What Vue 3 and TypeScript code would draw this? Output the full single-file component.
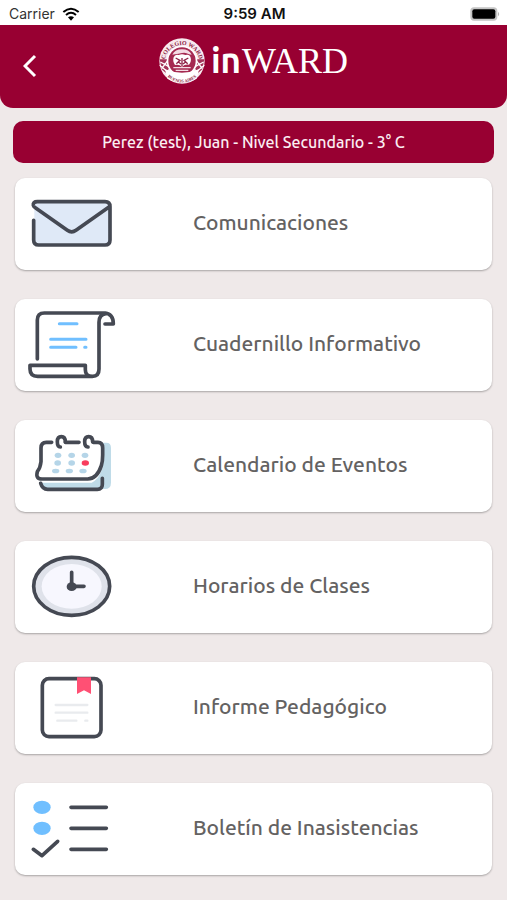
<script setup lang="ts">
type IconName = 'mail' | 'scroll' | 'calendar' | 'clock' | 'report' | 'checklist'

interface MenuItem {
  icon: IconName
  label: string
  viewBox: string
}

const student = 'Perez (test), Juan - Nivel Secundario - 3° C'

const items: MenuItem[] = [
  { icon: 'mail', label: 'Comunicaciones', viewBox: '45 204 360 276' },
  { icon: 'scroll', label: 'Cuadernillo Informativo', viewBox: '0 12 360 276' },
  { icon: 'calendar', label: 'Calendario de Eventos', viewBox: '0 0 360 276' },
  { icon: 'clock', label: 'Horarios de Clases', viewBox: '0 3 360 276' },
  { icon: 'report', label: 'Informe Pedagógico', viewBox: '0 6 360 276' },
  { icon: 'checklist', label: 'Boletín de Inasistencias', viewBox: '0 9 360 276' },
]
</script>

<template>
  <div class="screen">
    <div class="status">
      <span class="carrier">
        Carrier
        <svg class="wifi" viewBox="0 0 54 42" aria-hidden="true">
          <path d="M4 15Q27-5 50 15" />
          <path d="M12 24Q27 11 42 24" />
          <path class="wifi-dot" d="M18 31Q27 24 36 31L27 41Z" />
        </svg>
      </span>
      <span class="time">9:59 AM</span>
      <svg class="battery" viewBox="0 0 90 42" aria-hidden="true">
        <rect x="1" y="1" width="81" height="40" rx="11" fill="#c4c4c4" />
        <path d="M84 14Q91 21 84 28Z" fill="#b4b4b4" />
        <rect x="7" y="7" width="69" height="28" rx="6" fill="#000" />
      </svg>
    </div>

    <header class="header">
      <button class="back" type="button" aria-label="Volver">
        <svg viewBox="0 0 14 24" aria-hidden="true"><path d="M12 2L2 12L12 22" /></svg>
      </button>
      <div class="brand">
        <svg class="seal" viewBox="0 0 138 138" aria-hidden="true">
          <defs>
            <path id="seal-top" d="M17 73A52 52 0 0 1 121 73" />
            <path id="seal-bottom" d="M24 115A64 64 0 0 0 114 115" />
          </defs>
          <circle cx="69" cy="69" r="68" fill="#f8e9ee" />
          <path d="M2 64H30L38 82L20 104L8 94ZM136 64H108L100 82L118 104L130 94Z" fill="#a33458" />
          <path d="M4 72L30 86M8 92L26 68M134 72L108 86M130 92L112 68M2 82L22 98M136 82L116 98" stroke="#fff" stroke-width="4" />
          <circle cx="69" cy="69" r="46" fill="#fff" />
          <circle cx="69" cy="69" r="41" fill="#a52a51" />
          <path d="M40 50Q48 34 69 34T98 50L90 49Q80 42 69 45T48 49Z" fill="#f4dce4" />
          <path d="M44 58Q48 47 59 51Q69 46 79 51Q92 47 95 59Q98 70 90 80Q78 78 69 86Q60 78 48 81Q40 70 44 58Z" fill="#fff" />
          <path d="M69 60V84M50 60L63 67L52 77M88 60L75 67L86 77M58 72L66 78M80 72L72 78" stroke="#8f2348" stroke-width="4" fill="none" />
          <path d="M43 89H95M50 97H88" stroke="#f4dce4" stroke-width="4" />
          <path d="M18 94Q69 114 120 94L113 122Q69 146 25 122Z" fill="#fff" />
          <text class="seal-text"><textPath href="#seal-top" startOffset="50%">COLEGIO WARD</textPath></text>
          <text class="seal-small"><textPath href="#seal-bottom" startOffset="50%">BUENOS AIRES</textPath></text>
        </svg>
        <h1 class="name"><span class="in">in</span><span class="ward">WARD</span></h1>
      </div>
    </header>

    <main class="content">
      <p class="student">{{ student }}</p>
      <nav class="menu">
        <a v-for="item in items" :key="item.icon" class="card" href="#">
          <svg class="icon" :viewBox="item.viewBox" aria-hidden="true">
            <g v-if="item.icon === 'mail'" class="line">
              <rect x="103" y="276" width="226" height="129" rx="14" fill="#dfe9f7" stroke="none" />
              <path d="M107 294L112 275H315L328 288L228 361Q215 370 202 361Z" fill="#dfe9f7" stroke="none" />
              <path d="M101 331V390Q101 405 116 405H315Q330 405 330 390V290Q330 275 315 275H112Q98 275 100 286Q101 290 107 294L202 361Q215 370 228 361L328 290" />
            </g>
            <g v-else-if="item.icon === 'scroll'" class="line">
              <path d="M67 192V75Q67 54 88 54H268Q295 55 295 87H270" />
              <path d="M272 56Q252 59 252 82V222Q252 244 232 244Q211 244 211 224V211H45V222Q45 244 68 244H232" />
              <path class="blue" d="M133 86H186M107 133H213M107 157H183M209 157H213" />
            </g>
            <g v-else-if="item.icon === 'calendar'" class="line">
              <path d="M254 68H274Q288 68 288 84V188Q288 207 269 207H100Q82 207 78 188H230Q250 180 262 145Z" fill="#bfdbe8" stroke="none" />
              <path d="M110 67H94Q78 67 78 84V125Q76 144 67 155Q61 177 81 177H218Q246 177 259 137Q263 125 263 105V84Q263 67 249 67H235M151 67H192" fill="#fff" />
              <path d="M77 190Q82 208 98 208H247Q262 208 262 193V175" />
              <path d="M136 81Q127 80 127 65Q127 50 139 50Q151 50 151 66M219 81Q209 80 209 65Q209 50 221 50Q233 50 233 66" />
              <g fill="#b5d5e8" stroke="none">
                <ellipse cx="129" cy="106" rx="10" ry="8" /><ellipse cx="170" cy="106" rx="10" ry="8" /><ellipse cx="210" cy="106" rx="10" ry="8" />
                <ellipse cx="128" cy="129" rx="10" ry="8" /><ellipse cx="170" cy="129" rx="10" ry="8" />
                <ellipse cx="122" cy="153" rx="11" ry="7" /><ellipse cx="163" cy="153" rx="11" ry="7" /><ellipse cx="204" cy="153" rx="11" ry="7" />
                <ellipse cx="211" cy="129" rx="11" ry="8" fill="#f83d5d" />
              </g>
            </g>
            <g v-else-if="item.icon === 'clock'" class="line">
              <ellipse cx="170" cy="139" rx="114" ry="87" fill="#dfe2ea" />
              <ellipse cx="170" cy="139" rx="90" ry="67" fill="#f7f7fe" stroke="none" />
              <path class="hand" d="M170 97V139H207" />
              <ellipse cx="170" cy="140" rx="15" ry="13" fill="#454953" stroke="none" />
            </g>
            <g v-else-if="item.icon === 'report'" class="line">
              <rect x="82" y="56" width="176" height="174" rx="20" />
              <path d="M186 52H228V102L207 91L186 102Z" fill="#ff5074" stroke="none" />
              <path class="pale" d="M122 135H217M122 158H217M127 182H184M211 182H217" />
            </g>
            <g v-else class="line">
              <ellipse cx="81" cy="82" rx="26" ry="20" fill="#70bfff" stroke="none" />
              <ellipse cx="81" cy="145" rx="26" ry="20" fill="#70bfff" stroke="none" />
              <path d="M168 82H274M168 145H274M168 208H274M55 208L81 227L128 184" />
            </g>
          </svg>
          <span class="label">{{ item.label }}</span>
        </a>
      </nav>
    </main>
  </div>
</template>

<style>
body {
  margin: 0;
  background: #efe9e9;
}
</style>

<style scoped>
.screen {
  min-height: 100vh;
  background: #efe9e9;
  font-family: Ubuntu, "Noto Sans", sans-serif;
}

.status {
  display: grid;
  grid-template-columns: 1fr auto 1fr;
  align-items: center;
  height: 25px;
  padding: 2px 7px 0 9px;
  box-sizing: border-box;
  background: #fff;
  color: #111;
  font-family: Inter, sans-serif;
  font-size: 14px;
}

.carrier {
  display: flex;
  align-items: center;
  gap: 7px;
  color: #333;
}

.wifi {
  width: 18px;
  height: 14px;
  fill: none;
  stroke: #000;
  stroke-width: 6;
}

.wifi-dot {
  fill: #000;
  stroke: none;
}

.time {
  font-size: 15px;
  font-weight: 600;
}

.battery {
  justify-self: end;
  width: 30px;
  height: 14px;
}

.header {
  display: grid;
  grid-template-columns: 60px 1fr 60px;
  align-items: center;
  height: 83px;
  padding-bottom: 12px;
  box-sizing: border-box;
  border-radius: 0 0 13px 13px;
  background: #980032;
}

.back {
  display: flex;
  align-items: center;
  height: 44px;
  margin-top: 10px;
  padding: 0 0 0 23px;
  border: 0;
  background: none;
}

.back svg {
  width: 14px;
  height: 24px;
  fill: none;
  stroke: #fff;
  stroke-width: 3;
}

.brand {
  display: flex;
  align-items: center;
  justify-content: center;
  gap: 6px;
}

.seal {
  width: 46px;
  height: 46px;
}

.seal-text,
.seal-small {
  fill: #8a1a40;
  font-family: "Liberation Serif", serif;
  font-weight: 700;
  text-anchor: middle;
}

.seal-text {
  font-size: 18px;
}

.seal-small {
  font-size: 13px;
}

.name {
  display: flex;
  align-items: baseline;
  gap: 1px;
  margin: 0;
  color: #fff;
  line-height: 44px;
}

.in {
  font-size: 35px;
  font-weight: 700;
}

.ward {
  font-family: "Liberation Serif", serif;
  font-size: 36px;
  font-weight: 400;
}

.content {
  padding: 13px 13px 25px;
}

.student {
  margin: 0 0 15px;
  padding: 10px;
  border-radius: 10px;
  background: #980032;
  color: #fbeef2;
  font-size: 16px;
  font-weight: 500;
  line-height: 22px;
  text-align: center;
}

.menu {
  display: grid;
  gap: 29px;
  padding: 0 2px;
}

.card {
  display: flex;
  align-items: center;
  gap: 58px;
  border-radius: 10px;
  background: #fff;
  box-shadow: 0 1px 2px rgba(0, 0, 0, 0.3);
  color: #646262;
  text-decoration: none;
}

.icon {
  flex: none;
  width: 120px;
  height: 92px;
}

.line {
  fill: none;
  stroke: #454953;
  stroke-width: 11;
  stroke-linecap: round;
  stroke-linejoin: round;
}

.blue {
  stroke: #70bfff;
  stroke-width: 9;
}

.hand {
  stroke-width: 11;
}

.pale {
  stroke: #e9ebee;
  stroke-width: 7;
}

.label {
  padding-bottom: 4px;
  font-size: 21px;
  font-weight: 500;
  line-height: 28px;
}
</style>
